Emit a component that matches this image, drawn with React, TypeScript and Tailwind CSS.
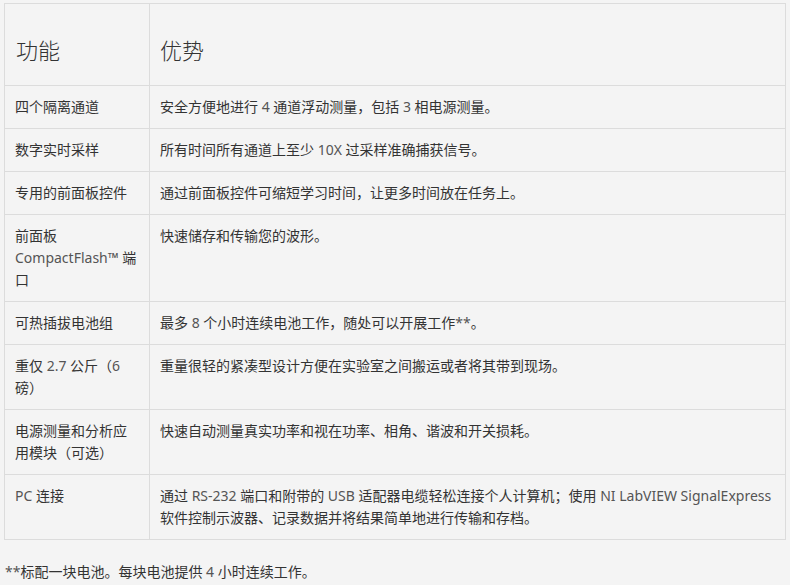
import React from 'react';

// latin runs in the source render lighter than the CJK text
const L: React.FC<{ children: React.ReactNode }> = ({ children }) => (
  <span className="text-[#555]">{children}</span>
);

const rows: { feature: React.ReactNode; benefit: React.ReactNode }[] = [
  {
    feature: '四个隔离通道',
    benefit: <>安全方便地进行 <L>4</L> 通道浮动测量，包括 <L>3</L> 相电源测量。</>,
  },
  {
    feature: '数字实时采样',
    benefit: <>所有时间所有通道上至少 <L>10X</L> 过采样准确捕获信号。</>,
  },
  {
    feature: '专用的前面板控件',
    benefit: '通过前面板控件可缩短学习时间，让更多时间放在任务上。',
  },
  {
    feature: <>前面板 <L>CompactFlash™</L> 端口</>,
    benefit: '快速储存和传输您的波形。',
  },
  {
    feature: '可热插拔电池组',
    benefit: <>最多 <L>8</L> 个小时连续电池工作，随处可以开展工作<L>**</L>。</>,
  },
  {
    feature: <>重仅 <L>2.7</L> 公斤（<L>6</L> 磅）</>,
    benefit: '重量很轻的紧凑型设计方便在实验室之间搬运或者将其带到现场。',
  },
  {
    feature: '电源测量和分析应用模块（可选）',
    benefit: '快速自动测量真实功率和视在功率、相角、谐波和开关损耗。',
  },
  {
    feature: <><L>PC</L> 连接</>,
    benefit: (
      <>
        通过 <L>RS-232</L> 端口和附带的 <L>USB</L> 适配器电缆轻松连接个人计算机；使用 <L>NI LabVIEW SignalExpress</L> 软件控制示波器、记录数据并将结果简单地进行传输和存档。
      </>
    ),
  },
];

const App: React.FC = () => {
  return (
    <div
      className="min-h-screen bg-[#f4f4f4] text-[#333] pt-[3px] pl-[4px]"
      style={{ fontFamily: '"Noto Sans", "Noto Sans CJK SC", sans-serif' }}
    >
      <table className="w-[782px] table-fixed border-collapse border border-[#dcdcdc]">
        <colgroup>
          <col className="w-[145px]" />
          <col />
        </colgroup>
        <thead>
          <tr>
            <th className="border border-[#dcdcdc] pl-[11px] pr-[10px] pt-[31px] pb-[20px] text-left align-bottom text-[22px] leading-[30px] font-light">
              功能
            </th>
            <th className="border border-[#dcdcdc] pl-[10px] pr-[10px] pt-[31px] pb-[20px] text-left align-bottom text-[22px] leading-[30px] font-light">
              优势
            </th>
          </tr>
        </thead>
        <tbody>
          {rows.map((row, i) => (
            <tr key={i}>
              <td className="border border-[#dcdcdc] px-[10px] py-[10px] align-top text-[14px] leading-[22px]">
                {row.feature}
              </td>
              <td className="border border-[#dcdcdc] px-[10px] py-[10px] align-top text-[14px] leading-[22px]">
                {row.benefit}
              </td>
            </tr>
          ))}
        </tbody>
      </table>
      <p className="mt-[21px] pl-[1px] text-[14px] leading-[22px]">
        <L>**</L>标配一块电池。每块电池提供 <L>4</L> 小时连续工作。
      </p>
    </div>
  );
};

export default App;
